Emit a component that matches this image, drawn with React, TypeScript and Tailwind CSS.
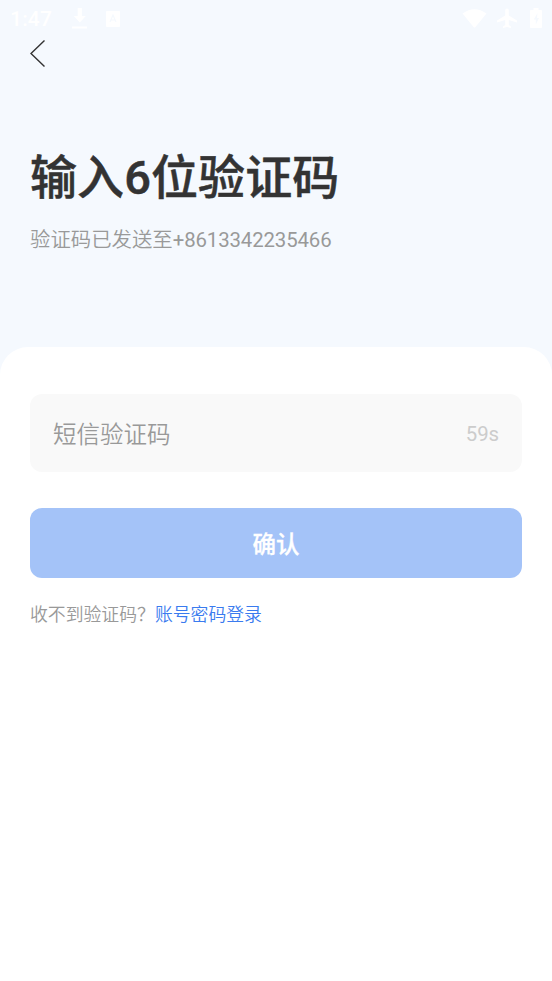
import React from "react";

function StatusBar() {
  return (
    <div className="flex h-9 items-center justify-between px-[10px] text-white">
      <div className="flex items-center">
        <span className="w-[61px] pt-0.5 text-[21px] font-medium leading-[34px] tracking-[0.2px]">1:47</span>
        {/* Download */}
        <svg width="18" height="22" viewBox="0 0 18 22" fill="currentColor">
          <path d="M6.7 1h4.2v8h3.9L8.8 15.4 2.8 9h3.9zM1 19.5h15v2H1z" />
        </svg>
        {/* Input method */}
        <svg className="ml-[17px] mt-px" width="14" height="16" viewBox="0 0 14 16">
          <rect width="14" height="16" rx="1" fill="currentColor" />
          <path d="M4 11 7 4l3 7M5.2 9h3.6" fill="none" stroke="#f5f9fe" strokeWidth="1.1" />
        </svg>
      </div>
      <div className="flex items-center">
        {/* Wifi */}
        <svg width="25" height="19" viewBox="0 0 25 19" fill="currentColor">
          <path d="M0.5 4.5Q12.5-4 24.5 4.5L13.5 18q-1 1-2 0z" />
        </svg>
        {/* Airplane */}
        <svg className="ml-2.5" width="20" height="21" viewBox="0 0 20 21" fill="currentColor">
          <path d="M20 14.5v-2l-8.2-5V2.3a1.8 1.8 0 0 0-3.6 0v5.2L0 12.5v2L8.2 12v5L6 18.6V20l4-1 4 1v-1.4L11.8 17v-5z" />
        </svg>
        {/* Battery */}
        <svg className="ml-[13px]" width="12" height="20" viewBox="0 0 12 20">
          <path
            d="M3.5 0h5v2H11q1 0 1 1v16q0 1-1 1H1q-1 0-1-1V3q0-1 1-1h2.5z"
            fill="currentColor"
          />
          <path d="M7.5 5 3.8 11.5h2V16.5L9 10H7z" fill="#f5f9fe" />
        </svg>
      </div>
    </div>
  );
}

function Header() {
  return (
    <header className="h-[311px] px-[30px]">
      <button className="block pt-[3px]" aria-label="返回">
        <svg width="16" height="30" viewBox="0 0 16 30" fill="none" stroke="#333" strokeWidth="1.4">
          <path d="M14.5 1.5 1 14.5 14.5 27.5" />
        </svg>
      </button>
      <h1 className="mt-[75px] font-['Roboto','Noto_Sans_CJK_SC',sans-serif] text-[47px] font-medium leading-[68px] tracking-[0.1px] text-[#333] [-webkit-text-stroke:0.5px_#333]">
        输入6位验证码
      </h1>
      <p className="mt-[13px] text-[20.4px] leading-[30px] text-[#999]">
        验证码已发送至<span className="tracking-[-0.13px]">+8613342235466</span>
      </p>
    </header>
  );
}

export default function App() {
  return (
    <div className="min-h-[981px] w-full bg-[#f5f9fe] font-['Roboto','Noto_Sans_CJK_SC_DemiLight','Noto_Sans_CJK_SC',sans-serif]">
      <StatusBar />
      <Header />
      <main className="min-h-[634px] rounded-t-[28px] bg-white px-[30px] pt-[47px]">
        <div className="flex h-[78px] items-center justify-between rounded-xl bg-[#f9f9f9] px-[23px]">
          <span className="pt-1.5 text-[23.5px] text-[#999]">短信验证码</span>
          <span className="pt-[3px] text-[20.4px] tracking-[-0.1px] text-[#ccc]">59s</span>
        </div>
        <button className="mt-9 block h-[70px] w-full rounded-xl bg-[#a4c3f8] pt-1.5 font-['Roboto','Noto_Sans_CJK_SC',sans-serif] text-[23.5px] font-medium text-white [-webkit-text-stroke:0.3px_#fff]">
          确认
        </button>
        <p className="mt-[23px] text-[17.85px] leading-7 text-[#999]">
          收不到验证码？<a className="text-[#3a7bef]">账号密码登录</a>
        </p>
      </main>
    </div>
  );
}
